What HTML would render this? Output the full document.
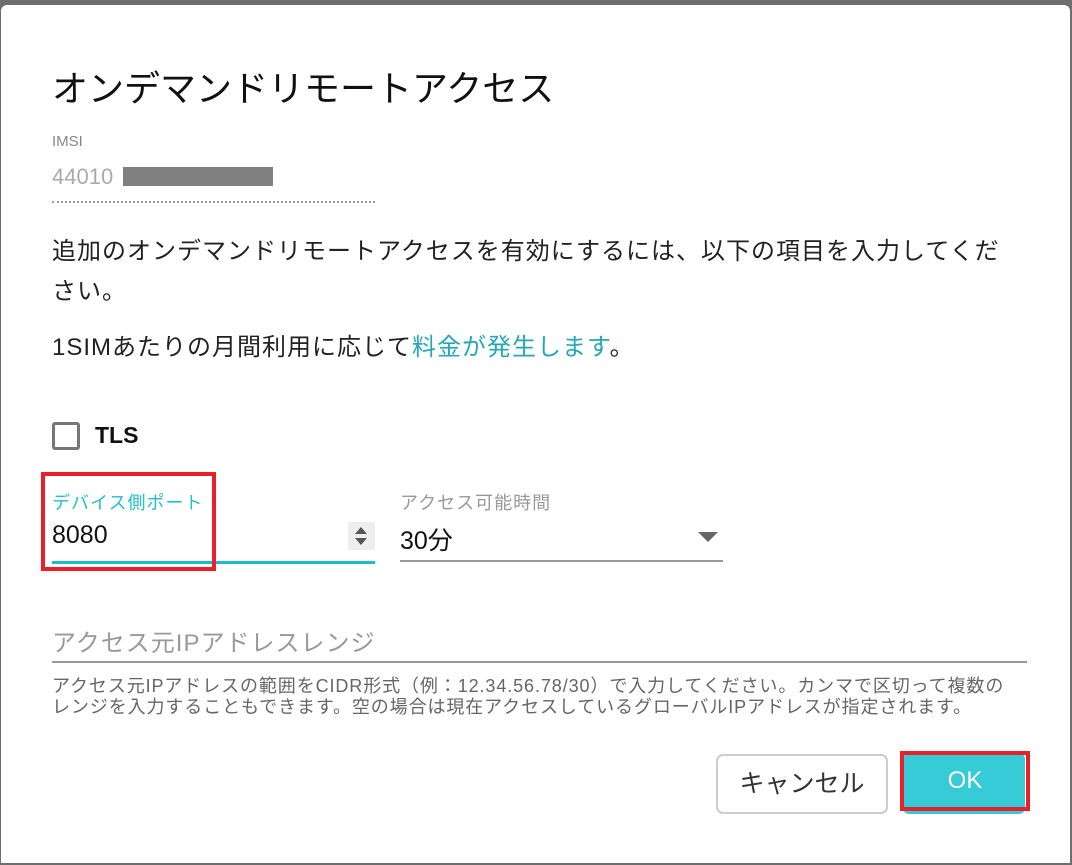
<!DOCTYPE html>
<html><head><meta charset="utf-8"><style>
*{margin:0;padding:0;box-sizing:border-box}
body{width:1072px;height:865px;background:#6e6e6e;position:relative;overflow:hidden;font-family:"Liberation Sans","Noto Sans CJK JP",sans-serif;color:#222}
.dlg{position:absolute;left:1px;top:5px;width:1069px;height:858px;background:#fff;border-radius:6px 6px 0 0}
.a{position:absolute;white-space:nowrap}
</style></head><body>
<div class="dlg"></div>
<div class="a" style="left:52px;top:60px;font-size:36px;color:#111">オンデマンドリモートアクセス</div>
<div class="a" style="left:52px;top:133px;font-size:15px;color:#888">IMSI</div>
<div class="a" style="left:52px;top:164px;font-size:22px;color:#aaa">44010</div>
<div class="a" style="left:123px;top:167px;width:150px;height:19px;background:#808080"></div>
<div class="a" style="left:52px;top:201px;width:323px;border-top:2px dotted #999"></div>
<div class="a" style="left:52px;top:232px;font-size:24px;letter-spacing:1px;line-height:40px;white-space:normal;width:962px">追加のオンデマンドリモートアクセスを有効にするには、以下の項目を入力してください。</div>
<div class="a" style="left:52px;top:327px;font-size:24px;letter-spacing:1px">1SIMあたりの月間利用に応じて<span style="color:#25a8b6">料金が発生します</span>。</div>
<div class="a" style="left:52px;top:422px;width:28px;height:28px;border:3px solid #777;border-radius:3px"></div>
<div class="a" style="left:95px;top:422px;font-size:23px;font-weight:bold;color:#111">TLS</div>
<div class="a" style="left:52px;top:489px;font-size:18px;letter-spacing:1px;color:#26bfcc">デバイス側ポート</div>
<div class="a" style="left:52px;top:521px;font-size:25px;color:#111">8080</div>
<div class="a" style="left:348px;top:522px;width:27px;height:28px;background:#eee"></div>
<div class="a" style="left:355px;top:527px;width:0;height:0;border-left:6px solid transparent;border-right:6px solid transparent;border-bottom:7px solid #555"></div>
<div class="a" style="left:355px;top:538px;width:0;height:0;border-left:6px solid transparent;border-right:6px solid transparent;border-top:7px solid #555"></div>
<div class="a" style="left:52px;top:561px;width:323px;height:3px;background:#17bfca"></div>
<div class="a" style="left:41px;top:472px;width:175px;height:99px;border:4px solid #e8202a"></div>
<div class="a" style="left:400px;top:489px;font-size:18px;letter-spacing:1px;color:#999">アクセス可能時間</div>
<div class="a" style="left:400px;top:521px;font-size:25px;color:#111">30分</div>
<div class="a" style="left:698px;top:532px;width:0;height:0;border-left:10px solid transparent;border-right:10px solid transparent;border-top:10px solid #666"></div>
<div class="a" style="left:400px;top:560px;width:323px;height:2px;background:#999"></div>
<div class="a" style="left:52px;top:623px;font-size:24px;letter-spacing:1px;color:#999">アクセス元IPアドレスレンジ</div>
<div class="a" style="left:52px;top:661px;width:975px;height:2px;background:#999"></div>
<div class="a" style="left:52px;top:676px;font-size:18px;letter-spacing:0.9px;line-height:21px;color:#666">アクセス元IPアドレスの範囲をCIDR形式（例：12.34.56.78/30）で入力してください。カンマで区切って複数の<br>レンジを入力することもできます。空の場合は現在アクセスしているグローバルIPアドレスが指定されます。</div>
<div class="a" style="left:716px;top:754px;width:172px;height:60px;border:2px solid #ccc;border-radius:7px;font-size:25px;color:#333;text-align:center;line-height:56px">キャンセル</div>
<div class="a" style="left:903px;top:753px;width:122px;height:61px;background:#36cbd6;border-radius:6px"></div>
<div class="a" style="left:900px;top:751px;width:130px;height:60px;border:4px solid #e8202a;font-size:24px;color:#fff;text-align:center;line-height:52px">OK</div>
</body></html>
